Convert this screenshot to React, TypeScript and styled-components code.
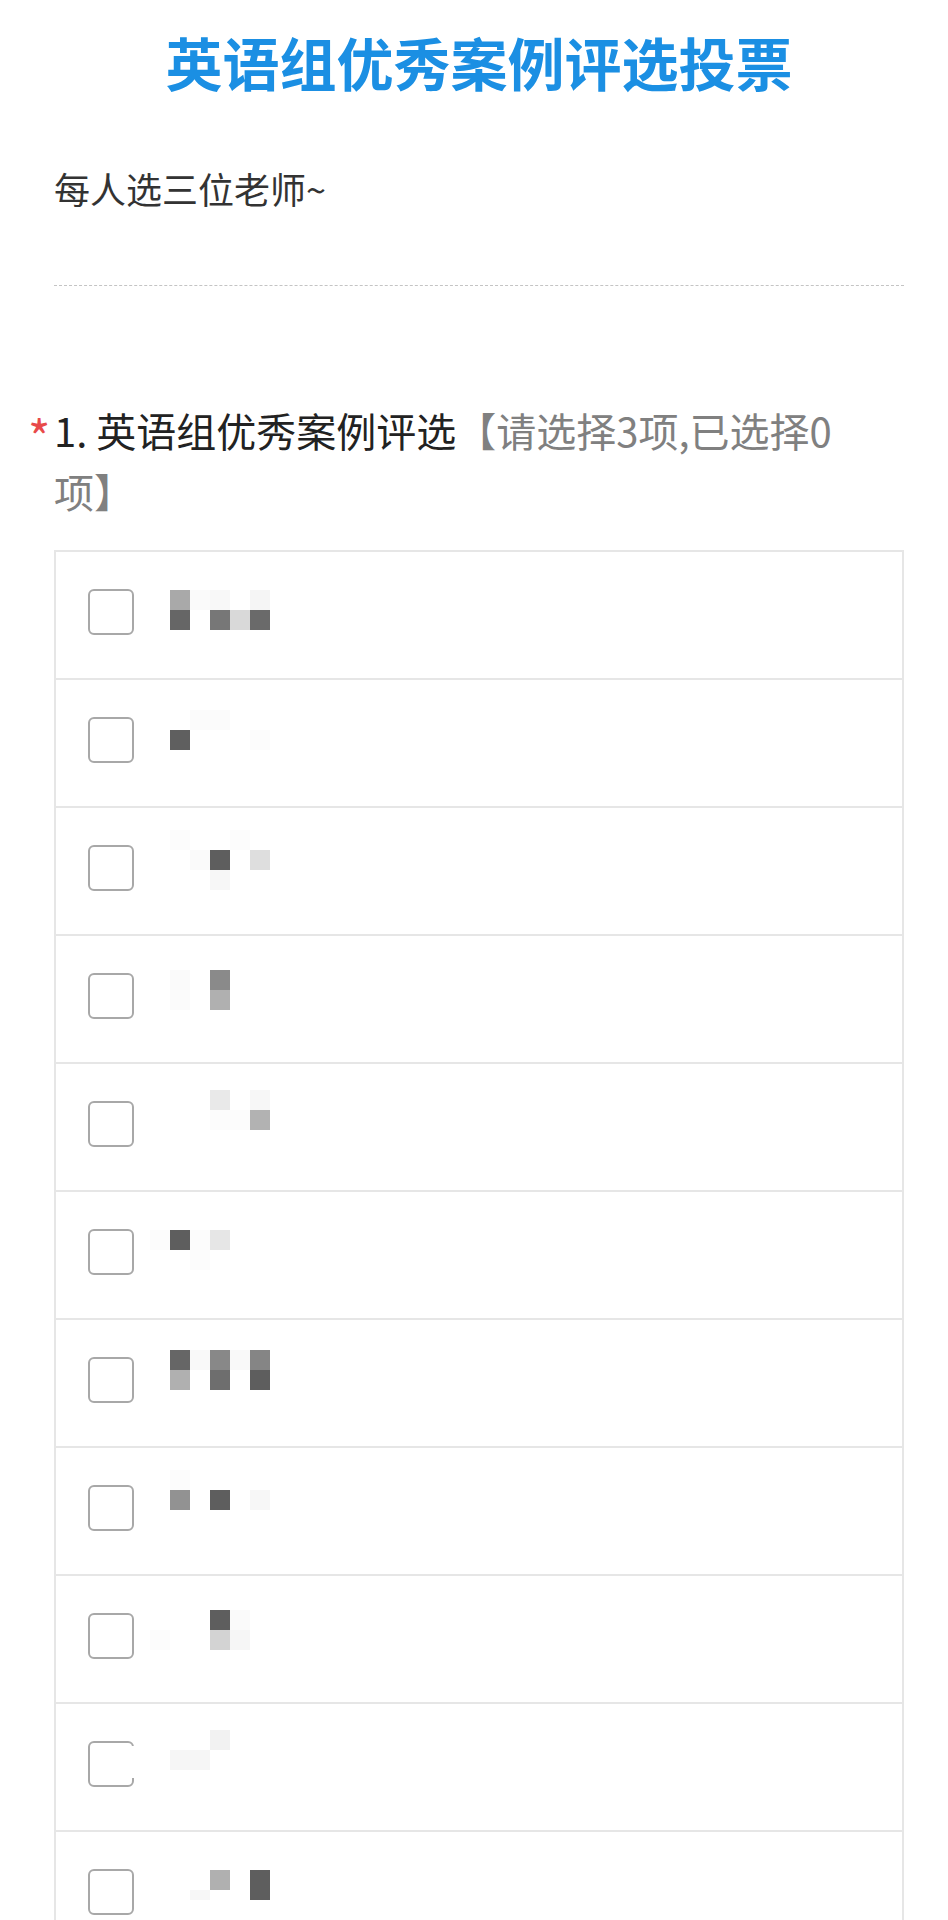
import { FC } from "react";
import styled, { createGlobalStyle } from "styled-components";

const GlobalStyle = createGlobalStyle`
  html, body {
    margin: 0;
    padding: 0;
    background: #ffffff;
  }
  body {
    font-family: "Noto Sans CJK SC", "Noto Sans", "Liberation Sans", sans-serif;
  }
`;

// [column, y offset from row top, colour, height?]
type Cell = [number, number, string, number?];

const options: Cell[][] = [
  [
    [0, 40, "#a9a9a9"], [0, 60, "#666666"], [1, 40, "#fafafa"],
    [2, 40, "#f8f8f8"], [2, 60, "#777777"], [3, 60, "#d9d9d9"],
    [4, 40, "#f5f5f5"], [4, 60, "#6a6a6a"],
  ],
  [[0, 52, "#5f5f5f"], [1, 32, "#fbfbfb"], [2, 32, "#fbfbfb"], [4, 52, "#fcfcfc"]],
  [
    [0, 24, "#fcfcfc"], [1, 44, "#fafafa"], [2, 44, "#5e5e5e"],
    [2, 64, "#f7f7f7"], [3, 24, "#fcfcfc"], [4, 44, "#dedede"],
  ],
  [[0, 36, "#fafafa"], [0, 56, "#fbfbfb"], [2, 36, "#8a8a8a"], [2, 56, "#b0b0b0"]],
  [
    [2, 28, "#e9e9e9"], [4, 28, "#f7f7f7"], [4, 48, "#b2b2b2"],
    [2, 48, "#fcfcfc"], [3, 48, "#fcfcfc"],
  ],
  [[-1, 40, "#fcfcfc"], [0, 40, "#5e5e5e"], [1, 40, "#fcfcfc"], [1, 60, "#fcfcfc"], [2, 40, "#e6e6e6"]],
  [
    [0, 32, "#666666"], [0, 52, "#b0b0b0"], [1, 32, "#f9f9f9"],
    [2, 32, "#888888"], [2, 52, "#6e6e6e"], [3, 32, "#f9f9f9"],
    [4, 32, "#858585"], [4, 52, "#5e5e5e"],
  ],
  [[0, 24, "#fcfcfc"], [0, 44, "#929292"], [2, 44, "#5e5e5e"], [4, 44, "#f7f7f7"]],
  [
    [-1, 56, "#fcfcfc"], [2, 36, "#5e5e5e"], [2, 56, "#d3d3d3"],
    [3, 36, "#fafafa"], [3, 56, "#f6f6f6"],
  ],
  [[-2, 44, "#ffffff", 32], [0, 48, "#f6f6f6"], [1, 48, "#f6f6f6"], [2, 28, "#f2f2f2"]],
  [[1, 60, "#f7f7f7", 10], [2, 40, "#b0b0b0"], [4, 40, "#5e5e5e"], [4, 60, "#5e5e5e", 10]],
  [],
];

const Page = styled.div`
  padding: 0 44px 0 54px;
`;

const Title = styled.h1`
  margin: 0;
  padding-top: 21px;
  font-size: 57px;
  line-height: 80px;
  font-weight: 700;
  text-align: center;
  color: #1b8fe3;
`;

const Intro = styled.p`
  margin: 0;
  padding: 60px 0 70px;
  border-bottom: 1px dashed #c4c4c4;
  font-size: 36px;
  line-height: 54px;
  color: #333333;
`;

const Question = styled.div`
  display: flex;
  margin-top: 114px;
  font-size: 40px;
  line-height: 61px;
`;

const Star = styled.span`
  flex-shrink: 0;
  width: 26px;
  margin-left: -26px;
  padding-top: 10px;
  font-size: 48px;
  line-height: 50px;
  color: #e84a4a;
`;

const QuestionText = styled.div`
  flex: 1;
  padding-right: 35px;
  color: #222222;
`;

const Hint = styled.span`
  color: #808080;
`;

const OptionList = styled.div`
  margin-top: 28px;
  border: 2px solid #e6e6e6;
  border-bottom: none;
`;

const Option = styled.label`
  display: flex;
  align-items: center;
  height: 128px;
  box-sizing: border-box;
  padding: 0 0 6px 32px;
  border-bottom: 2px solid #e6e6e6;
`;

const Checkbox = styled.span`
  flex-shrink: 0;
  width: 46px;
  height: 46px;
  box-sizing: border-box;
  border: 2px solid #a8a8a8;
  border-radius: 6px;
  background: #ffffff;
`;

const Blurred = styled.svg`
  align-self: flex-start;
  flex-shrink: 0;
  margin-left: -4px;
`;

const OptionLabel: FC<{ cells: Cell[] }> = ({ cells }) => (
  <Blurred width="160" height="126" viewBox="0 0 160 126">
    {cells.map(([c, y, fill, h], i) => (
      <rect key={i} x={40 + c * 20} y={y - 2} width={20} height={h ?? 20} fill={fill} />
    ))}
  </Blurred>
);

const App: FC = () => {
  return (
    <Page>
      <GlobalStyle />
      <Title>英语组优秀案例评选投票</Title>
      <Intro>每人选三位老师~</Intro>
      <Question>
        <Star>*</Star>
        <QuestionText>
          <span>1. 英语组优秀案例评选</span>
          <Hint>【请选择3项,已选择0</Hint>
          <Hint>项】</Hint>
        </QuestionText>
      </Question>
      <OptionList>
        {options.map((cells, i) => (
          <Option key={i}>
            <Checkbox />
            <OptionLabel cells={cells} />
          </Option>
        ))}
      </OptionList>
    </Page>
  );
};

export default App;
